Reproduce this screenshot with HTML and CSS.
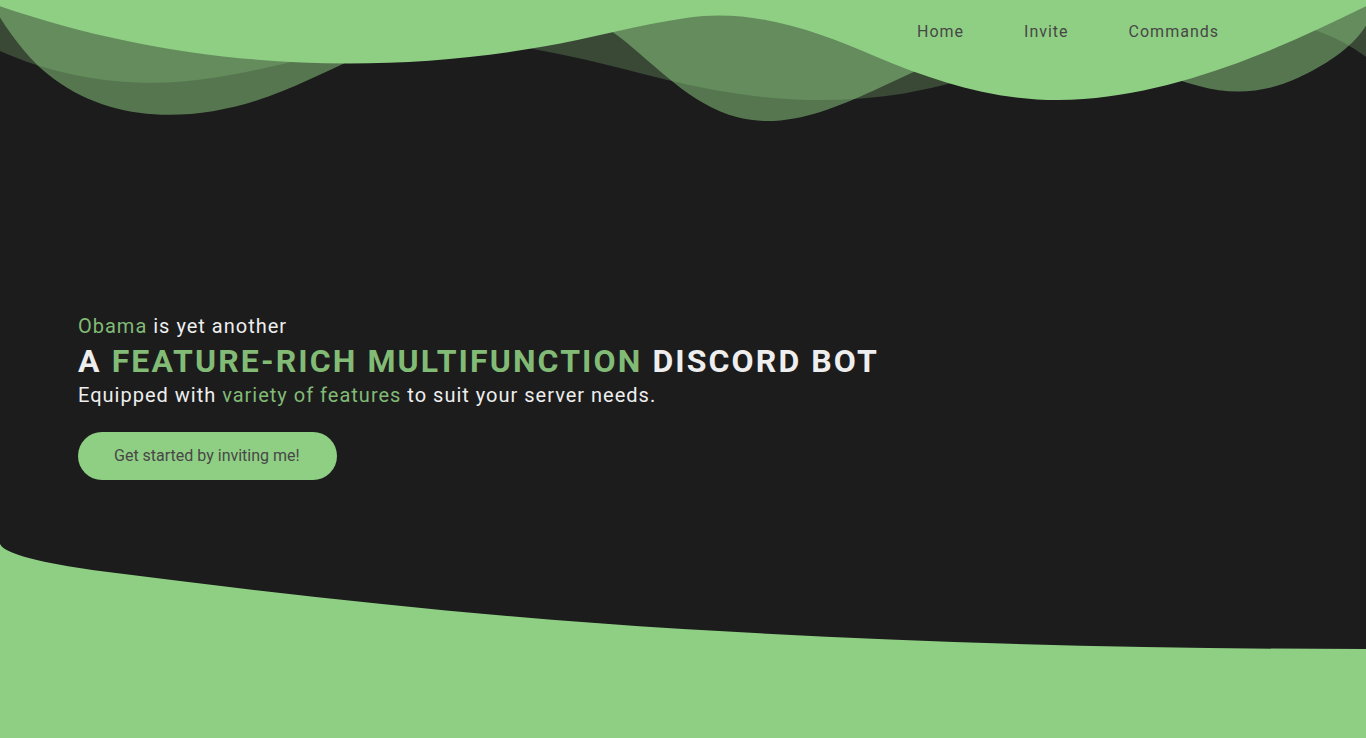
FILE: index.html
```html
<!DOCTYPE html>
<html lang="en">
<head>
<meta charset="utf-8">
<title>Obama - Discord Bot</title>
<link rel="stylesheet" href="styles.css">
</head>
<body>
<header class="hero">
  <div class="waves-top" aria-hidden="true">
    <svg viewBox="0 0 1200 120" preserveAspectRatio="none">
      <path d="M0,0V46.29c47.79,22.2,103.59,32.17,158,28,70.36-5.37,136.33-33.31,206.8-37.5C438.64,32.43,512.34,53.67,583,72.05c69.27,18,138.3,24.88,209.4,13.08,36.15-6,69.85-17.84,104.45-29.34C989.49,25,1113-14.29,1200,52.47V0Z" opacity=".25" class="fill"></path>
      <path d="M0,0V15.81C13,36.92,27.64,56.86,47.69,72.05,99.41,111.27,165,111,224.58,91.58c31.15-10.15,60.09-26.07,89.67-39.8,40.92-19,84.73-46,130.83-49.67,36.26-2.85,70.9,9.42,98.6,31.56,31.77,25.39,62.32,62,103.63,73,40.44,10.79,81.35-6.69,119.13-24.28s75.16-39,116.92-43.05c59.73-5.85,113.28,22.88,168.9,38.84,30.2,8.66,59,6.17,87.09-7.5,22.43-10.89,48-26.93,60.65-49.24V0Z" opacity=".5" class="fill"></path>
      <path d="M0,0V5.63C149.93,59,314.09,71.32,475.83,42.57c43-7.64,84.23-20.12,127.61-26.46,59-8.63,112.48,12.24,165.56,35.4C827.93,77.22,886,95.24,951.2,90c86.53-7,172.46-45.71,248.8-84.81V0Z" class="fill"></path>
    </svg>
  </div>

  <nav class="nav">
    <a href="#" class="nav-link">Home</a>
    <a href="#" class="nav-link">Invite</a>
    <a href="#" class="nav-link">Commands</a>
  </nav>

  <div class="hero-content">
    <p class="intro"><span class="accent">Obama</span> is yet another</p>
    <h1 class="title">A <span class="accent">FEATURE-RICH MULTIFUNCTION</span> DISCORD BOT</h1>
    <p class="sub">Equipped with <span class="accent">variety of features</span> to suit your server needs.</p>
    <a href="#" class="cta">Get started by inviting me!</a>
  </div>

  <div class="curve-bottom" aria-hidden="true">
    <svg viewBox="0 0 1366 106" preserveAspectRatio="none">
      <path class="fill" d="M0,0 C5,12 60,21.8 100,27 C294,52 489,73.4 683,85 C911,98.7 1138,105 1366,105 L1366,106 L0,106 Z"></path>
    </svg>
  </div>
</header>

<section class="features"></section>
</body>
</html>
```

FILE: styles.css
```css
* {
  box-sizing: border-box;
}

html, body {
  margin: 0;
  padding: 0;
}

body {
  background: #8fcf83;
  font-family: Roboto, "Liberation Sans", Arial, sans-serif;
  color: #eeeeee;
  overflow-x: hidden;
}

.fill {
  fill: #8fcf83;
}

.hero {
  position: relative;
  height: 650px;
  background: #1c1c1c;
  overflow: hidden;
}

.waves-top {
  position: absolute;
  top: 0;
  left: 0;
  width: 100%;
  overflow: hidden;
  line-height: 0;
}

.waves-top svg {
  display: block;
  width: calc(100% + 1.3px);
  height: 132px;
}

.nav {
  position: relative;
  z-index: 2;
  display: flex;
  justify-content: flex-end;
  gap: 60px;
  padding: 22px 147px 0 0;
}

.nav-link {
  font-size: 16px;
  line-height: 19px;
  letter-spacing: 1px;
  color: #474747;
  text-decoration: none;
}

.hero-content {
  position: relative;
  z-index: 2;
  display: flex;
  flex-direction: column;
  align-items: flex-start;
  padding: 273px 0 0 78px;
}

.intro,
.sub {
  margin: 0;
  font-size: 20px;
  line-height: 24px;
  letter-spacing: 1px;
  color: #eeeeee;
}

.title {
  margin: 4px 0 0;
  font-size: 32px;
  line-height: 38px;
  font-weight: 700;
  letter-spacing: 2.1px;
  color: #eeeeee;
}

.sub {
  margin-top: 3px;
}

.accent {
  color: #82bb76;
}

.cta {
  margin-top: 25px;
  display: inline-block;
  height: 48px;
  line-height: 48px;
  padding: 0 37px 0 36px;
  border-radius: 24px;
  background: #8fcf83;
  color: #474747;
  font-size: 16px;
  text-decoration: none;
}

.curve-bottom {
  position: absolute;
  left: 0;
  bottom: 0;
  width: 100%;
  line-height: 0;
}

.curve-bottom svg {
  display: block;
  width: 100%;
  height: 106px;
}

.features {
  height: 300px;
  background: #8fcf83;
}
```
